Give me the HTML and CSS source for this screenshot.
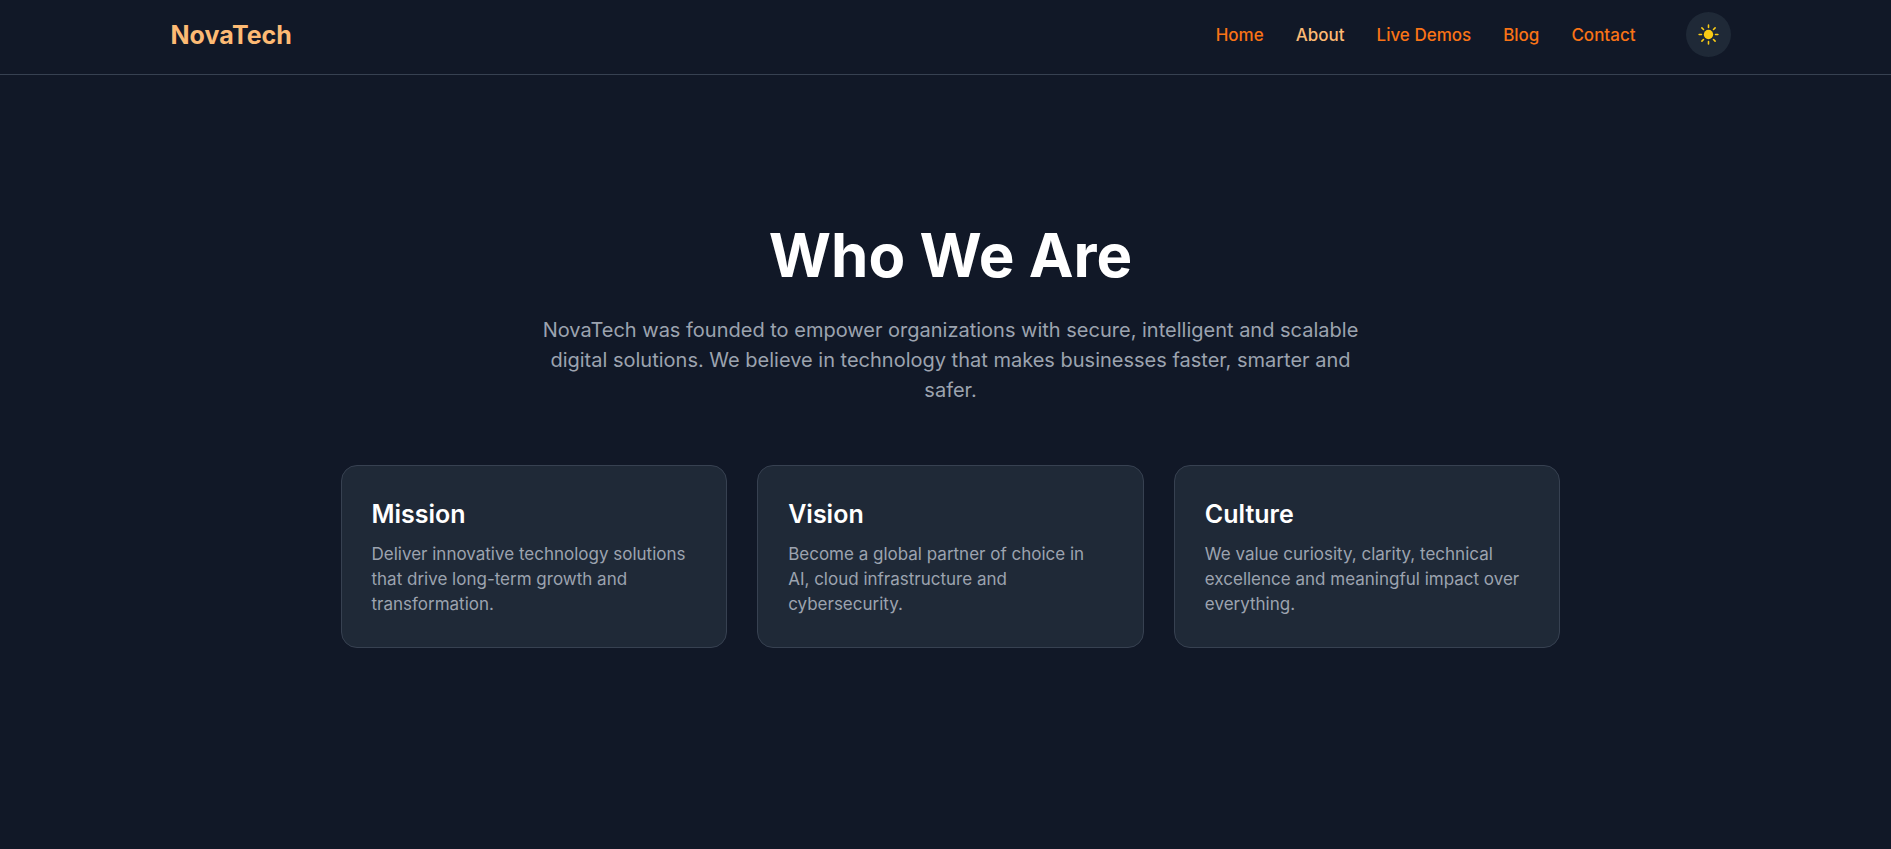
FILE: index.html
```html
<!DOCTYPE html>
<html lang="en">
<head>
<meta charset="utf-8">
<title>NovaTech – About</title>
<link rel="stylesheet" href="styles.css">
</head>
<body>
<header class="site-header">
  <div class="bar">
    <a class="brand" href="#">NovaTech</a>
    <div class="actions">
      <nav class="nav" aria-label="Main">
        <a href="#">Home</a>
        <a href="#" class="active" aria-current="page">About</a>
        <a href="#">Live Demos</a>
        <a href="#">Blog</a>
        <a href="#">Contact</a>
      </nav>
      <button class="theme" type="button" aria-label="Toggle theme">
        <svg viewBox="0 0 24 24" fill="none" stroke="currentColor" stroke-width="1.5" stroke-linecap="round" aria-hidden="true"><circle cx="12" cy="12" r="4.5" fill="currentColor" stroke="none"/><path d="M12 3v2.25M12 18.75V21M3 12h2.25M18.75 12H21M5.64 5.64l1.59 1.59M16.77 16.77l1.59 1.59M5.64 18.36l1.59-1.59M16.77 7.23l1.59-1.59"/></svg>
      </button>
    </div>
  </div>
</header>
<main class="about">
  <h1>Who We Are</h1>
  <p class="lead">NovaTech was founded to empower organizations with secure, intelligent and scalable digital solutions. We believe in technology that makes businesses faster, smarter and safer.</p>
  <div class="cards">
    <section class="card"><h2>Mission</h2><p>Deliver innovative technology solutions that drive long-term growth and transformation.</p></section>
    <section class="card"><h2>Vision</h2><p>Become a global partner of choice in AI, cloud infrastructure and cybersecurity.</p></section>
    <section class="card"><h2>Culture</h2><p>We value curiosity, clarity, technical excellence and meaningful impact over everything.</p></section>
  </div>
</main>
</body>
</html>
```
FILE: styles.css
```css
* { box-sizing: border-box; margin: 0; padding: 0; }
body {
  min-height: 100vh;
  background: #111827;
  color: #fff;
  font: 16px/24px Inter, sans-serif;
}
a { color: inherit; text-decoration: none; }
.site-header { border-bottom: 1px solid #374151; }
.bar {
  max-width: 1570px;
  margin: 0 auto;
  padding: 12px 0 17px 10px;
  display: flex;
  align-items: center;
  justify-content: space-between;
}
.brand { color: #fdba74; font-size: 25px; line-height: 32px; font-weight: 700; }
.actions { display: flex; align-items: center; gap: 50px; }
.nav { display: flex; gap: 32px; color: #f97316; font-size: 17px; font-weight: 500; }
.nav .active { color: #fdba74; }
.theme {
  width: 45px;
  height: 45px;
  display: grid;
  place-items: center;
  border: 0;
  border-radius: 50%;
  background: #1f2937;
  color: #facc15;
}
.theme svg { width: 25px; height: 25px; }
.about {
  max-width: 1230px;
  margin: 0 auto;
  padding: 144px 0 144px 10px;
}
h1 { font-size: 60px; line-height: 72px; font-weight: 700; text-align: center; }
.lead {
  max-width: 840px;
  margin: 24px auto 60px;
  color: #9ca3af;
  font-size: 20px;
  line-height: 30px;
  text-align: center;
}
.cards { display: grid; grid-template-columns: repeat(3, 1fr); gap: 30px; }
.card { padding: 30px 36px 30px 30px; border: 1px solid #374151; border-radius: 16px; background: #1f2937; }
.card h2 { margin-bottom: 10px; font-size: 25px; line-height: 36px; font-weight: 600; }
.card p { color: #9ca3af; font-size: 17px; line-height: 25px; }
```
